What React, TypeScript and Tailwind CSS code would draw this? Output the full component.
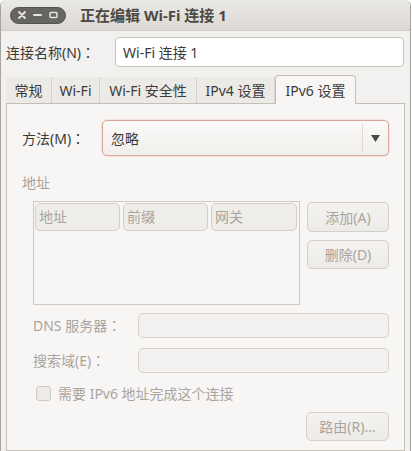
import React from "react";

const font = { fontFamily: '"Noto Sans", "Noto Sans CJK SC", sans-serif' };

function Colon() {
  return <span className="font-['Noto_Sans_CJK_TC']">：</span>;
}

function Tab({ label, w, active }: { label: string; w: string; active?: boolean }) {
  if (active) {
    return (
      <div
        className={`${w} h-[29px] -mb-px relative z-10 flex items-center justify-center bg-[#f7f6f5] border border-b-0 border-[#c3bfb9] rounded-t-[4px] text-[#3c3b37]`}
      >
        {label}
      </div>
    );
  }
  return (
    <div
      className={`${w} h-[26px] flex items-center justify-center bg-[#eceae7] border-r border-[#d6d3ce] text-[#3c3b37]`}
    >
      {label}
    </div>
  );
}

function HeaderCell({ label, w }: { label: string; w: string }) {
  return (
    <div
      className={`${w} h-[28px] flex items-start pt-[2px] pl-[3px] rounded-[5px] border border-[#d3cfc9] bg-[#efedea] text-[#aaa49c]`}
    >
      {label}
    </div>
  );
}

function DisabledButton({ label, w, h }: { label: string; w: string; h: string }) {
  return (
    <div
      className={`${w} ${h} flex items-center justify-center rounded-[5px] border border-[#d3d0cb] bg-gradient-to-b from-[#f4f3f1] to-[#ecebe8] text-[#aaa49c]`}
    >
      {label}
    </div>
  );
}

export default function App() {
  return (
    <div className="w-[412px] h-[451px] overflow-hidden bg-white text-[14px]" style={font}>
      <div className="w-[411px] h-[451px] flex flex-col border-x border-[#a8a5a0] rounded-t-[6px] overflow-hidden bg-[#f2f1f0]">
        {/* Title bar */}
        <div className="h-[31px] shrink-0 flex items-center pl-[9px] bg-gradient-to-b from-[#ebe9e6] to-[#dbd8d3] border-b border-[#d0cdc8]">
          <div className="w-[56px] h-[17px] rounded-full bg-[#67655f] flex items-center justify-between px-[7px] border border-[#55534e]">
            <svg width="8" height="8" viewBox="0 0 8 8">
              <path d="M1 1 L7 7 M7 1 L1 7" stroke="#e4e3e1" strokeWidth="1.8" strokeLinecap="round" />
            </svg>
            <svg width="9" height="8" viewBox="0 0 9 8">
              <path d="M1 4 H8" stroke="#e4e3e1" strokeWidth="2" strokeLinecap="round" />
            </svg>
            <svg width="9" height="8" viewBox="0 0 9 8">
              <rect x="1" y="1.5" width="7" height="5" rx="1" fill="none" stroke="#e4e3e1" strokeWidth="1.5" />
            </svg>
          </div>
          <div className="ml-[14px] font-bold text-[15px] text-[#4c4944]">正在编辑 Wi-Fi 连接 1</div>
        </div>

        {/* Body */}
        <div className="flex-1 flex flex-col px-[5px]">
          {/* Name row */}
          <div className="mt-[6px] flex items-center h-[30px]">
            <div className="w-[109px] text-[#3c3b37]">
              连接名称(N)<Colon />
            </div>
            <div className="flex-1 h-[30px] mr-[1px] flex items-center pl-[7px] bg-white border border-[#c7c3bd] rounded-[4px] text-[#3c3b37]">
              Wi-Fi 连接 1
            </div>
          </div>

          {/* Tabs */}
          <div className="mt-[7px] flex items-end h-[29px]">
            <Tab label="常规" w="w-[46px]" />
            <Tab label="Wi-Fi" w="w-[48px]" />
            <Tab label="Wi-Fi 安全性" w="w-[97px]" />
            <Tab label="IPv4 设置" w="w-[78px]" />
            <Tab label="IPv6 设置" w="w-[81px]" active />
          </div>

          {/* Panel */}
          <div className="flex-1 border border-[#c3bfb9] bg-[#f7f6f5] pl-[15px] pr-[15px] pt-[16px] flex flex-col">
            {/* Method */}
            <div className="flex items-center h-[36px]">
              <div className="w-[80px] text-[#3c3b37]">
                方法(M)<Colon />
              </div>
              <div className="flex-1 h-[36px] flex items-center rounded-[5px] border border-[#d9a797] bg-gradient-to-b from-[#fbfaf9] to-[#f1efec] shadow-[0_0_0_0.5px_#efd3c8]">
                <div className="flex-1 pl-[8px] text-[#3c3b37]">忽略</div>
                <div className="w-px h-[28px] bg-[#dedad5]" />
                <div className="w-[25px] flex items-center justify-center">
                  <svg width="9" height="7" viewBox="0 0 9 7">
                    <path d="M0 0 H9 L4.5 7 Z" fill="#4b4944" />
                  </svg>
                </div>
              </div>
            </div>

            {/* Address header */}
            <div className="mt-[16px] text-[#a8a199]">地址</div>

            {/* Table + buttons */}
            <div className="mt-[8px] ml-[11px] flex">
              <div className="w-[267px] h-[104px] border border-[#cdc9c3] p-[1px] flex gap-[3px]">
                <HeaderCell label="地址" w="w-[85px]" />
                <HeaderCell label="前缀" w="w-[85px]" />
                <HeaderCell label="网关" w="w-[86px]" />
              </div>
              <div className="ml-[7px] flex flex-col gap-[8px] pt-[1px]">
                <DisabledButton label="添加(A)" w="w-[82px]" h="h-[30px]" />
                <DisabledButton label="删除(D)" w="w-[82px]" h="h-[29px]" />
              </div>
            </div>

            {/* DNS */}
            <div className="mt-[8px] ml-[11px] flex items-center h-[25px]">
              <div className="w-[105px] text-[#aaa49c]">
                DNS 服务器<Colon />
              </div>
              <div className="flex-1 h-[25px] rounded-[5px] border border-[#d6d2cc] bg-[#f2f1ef]" />
            </div>

            {/* Search domain */}
            <div className="mt-[10px] ml-[11px] flex items-center h-[25px]">
              <div className="w-[105px] text-[#aaa49c]">
                搜索域(E)<Colon />
              </div>
              <div className="flex-1 h-[25px] rounded-[5px] border border-[#d6d2cc] bg-[#f2f1ef]" />
            </div>

            {/* Checkbox */}
            <div className="mt-[12px] ml-[14px] flex items-center h-[16px]">
              <div className="w-[15px] h-[15px] rounded-[3px] border border-[#cfcbc5] bg-[#ecebe8]" />
              <div className="ml-[7px] text-[#aaa49c]">需要 IPv6 地址完成这个连接</div>
            </div>

            {/* Routes */}
            <div className="mt-[11px] flex justify-end">
              <DisabledButton label="路由(R)..." w="w-[83px]" h="h-[29px]" />
            </div>
          </div>
        </div>
      </div>
    </div>
  );
}
